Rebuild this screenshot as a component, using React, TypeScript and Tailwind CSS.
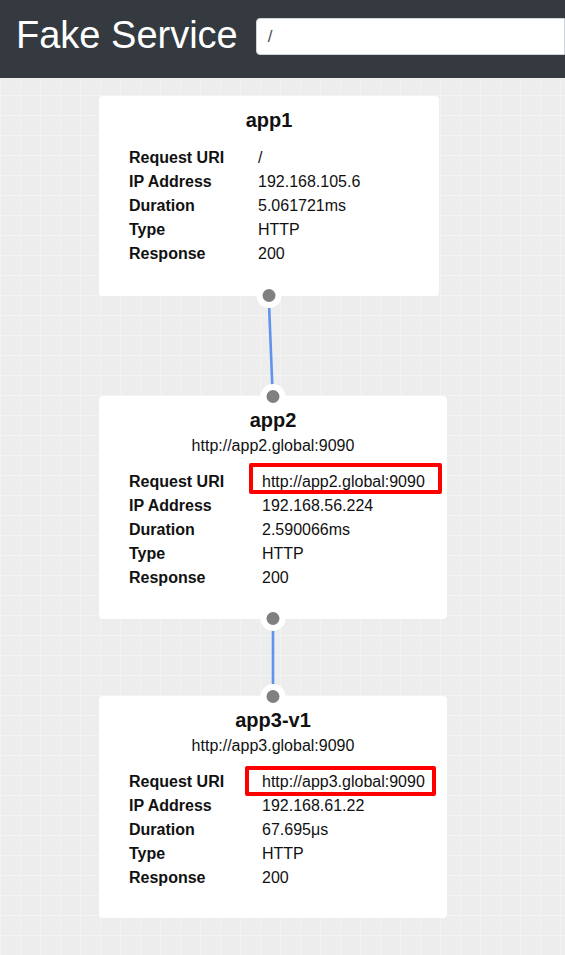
import React from "react";

type Row = { label: string; value: string };

function Handle({ pos }: { pos: "top" | "bottom" }) {
  return (
    <div
      className={`absolute left-1/2 z-10 flex h-[25px] w-[25px] -translate-x-1/2 items-center justify-center rounded-full bg-white ${
        pos === "top" ? "top-[-12px]" : "bottom-[-12px]"
      }`}
    >
      <div className="h-[13px] w-[13px] rounded-full bg-[#808080]" />
    </div>
  );
}

function Card({
  title,
  subtitle,
  rows,
  width,
  cols,
  box,
  top,
  bottom,
  pb,
}: {
  title: string;
  subtitle?: string;
  rows: Row[];
  width: string;
  cols: string;
  box?: string;
  top?: boolean;
  bottom?: boolean;
  pb: string;
}) {
  return (
    <div className={`relative rounded-[4px] bg-white pt-[10px] ${pb} ${width}`}>
      {top && <Handle pos="top" />}
      {bottom && <Handle pos="bottom" />}
      <div className="text-center text-[20px] font-bold leading-[28px]">{title}</div>
      {subtitle && <div className="text-center text-[16px] leading-[24px]">{subtitle}</div>}
      <div className={`mt-[12px] grid pl-[30px] text-[16px] leading-[24px] ${cols}`}>
        {rows.map((r, i) => (
          <React.Fragment key={r.label}>
            <div className="font-bold">{r.label}</div>
            <div className="relative">
              {i === 0 && box && <span className={`absolute rounded-[2px] border-[4px] border-[#ff0000] ${box}`} />}
              <span className="relative">{r.value}</span>
            </div>
          </React.Fragment>
        ))}
      </div>
    </div>
  );
}

export default function App() {
  return (
    <div className="flex min-h-screen flex-col font-['Liberation_Sans',Arial,sans-serif] text-[#111]">
      <header className="flex h-[78px] shrink-0 items-start bg-[#343a40] pl-[16px]">
        <h1 className="mt-[13px] text-[38px] font-normal leading-[44px] text-white">Fake Service</h1>
        <div className="ml-[18px] mt-[18px] flex h-[37px] flex-1 items-center rounded-l-[4px] border border-[#ced4da] bg-white pl-[11px] text-[17px] text-[#495057]">
          /
        </div>
      </header>
      <main className="flex-1 bg-[#ededed] bg-[linear-gradient(to_right,#f3f3f3_1px,transparent_1px),linear-gradient(to_bottom,#f3f3f3_1px,transparent_1px)] bg-[size:20px_20px] bg-[position:0px_17px] pl-[99px] pt-[18px]">
        <Card
          title="app1"
          width="w-[340px]"
          cols="grid-cols-[129px_1fr]"
          pb="pb-[30px]"
          bottom
          rows={[
            { label: "Request URI", value: "/" },
            { label: "IP Address", value: "192.168.105.6" },
            { label: "Duration", value: "5.061721ms" },
            { label: "Type", value: "HTTP" },
            { label: "Response", value: "200" },
          ]}
        />
        <svg width="348" height="100" className="block">
          <line x1="169.7" y1="0" x2="173.7" y2="100" stroke="#5f93f0" strokeWidth="2.6" />
        </svg>
        <Card
          title="app2"
          subtitle="http://app2.global:9090"
          width="w-[348px]"
          cols="grid-cols-[133px_1fr]"
          pb="pb-[29px]"
          box="left-[-13px] top-[-7px] h-[31px] w-[193px]"
          top
          bottom
          rows={[
            { label: "Request URI", value: "http://app2.global:9090" },
            { label: "IP Address", value: "192.168.56.224" },
            { label: "Duration", value: "2.590066ms" },
            { label: "Type", value: "HTTP" },
            { label: "Response", value: "200" },
          ]}
        />
        <svg width="348" height="77" className="block">
          <line x1="174" y1="0" x2="174" y2="77" stroke="#5f93f0" strokeWidth="2.6" />
        </svg>
        <Card
          title="app3-v1"
          subtitle="http://app3.global:9090"
          width="w-[348px]"
          cols="grid-cols-[133px_1fr]"
          pb="pb-[28px]"
          box="left-[-17px] top-[-4px] h-[30px] w-[191px]"
          top
          rows={[
            { label: "Request URI", value: "http://app3.global:9090" },
            { label: "IP Address", value: "192.168.61.22" },
            { label: "Duration", value: "67.695μs" },
            { label: "Type", value: "HTTP" },
            { label: "Response", value: "200" },
          ]}
        />
      </main>
    </div>
  );
}
